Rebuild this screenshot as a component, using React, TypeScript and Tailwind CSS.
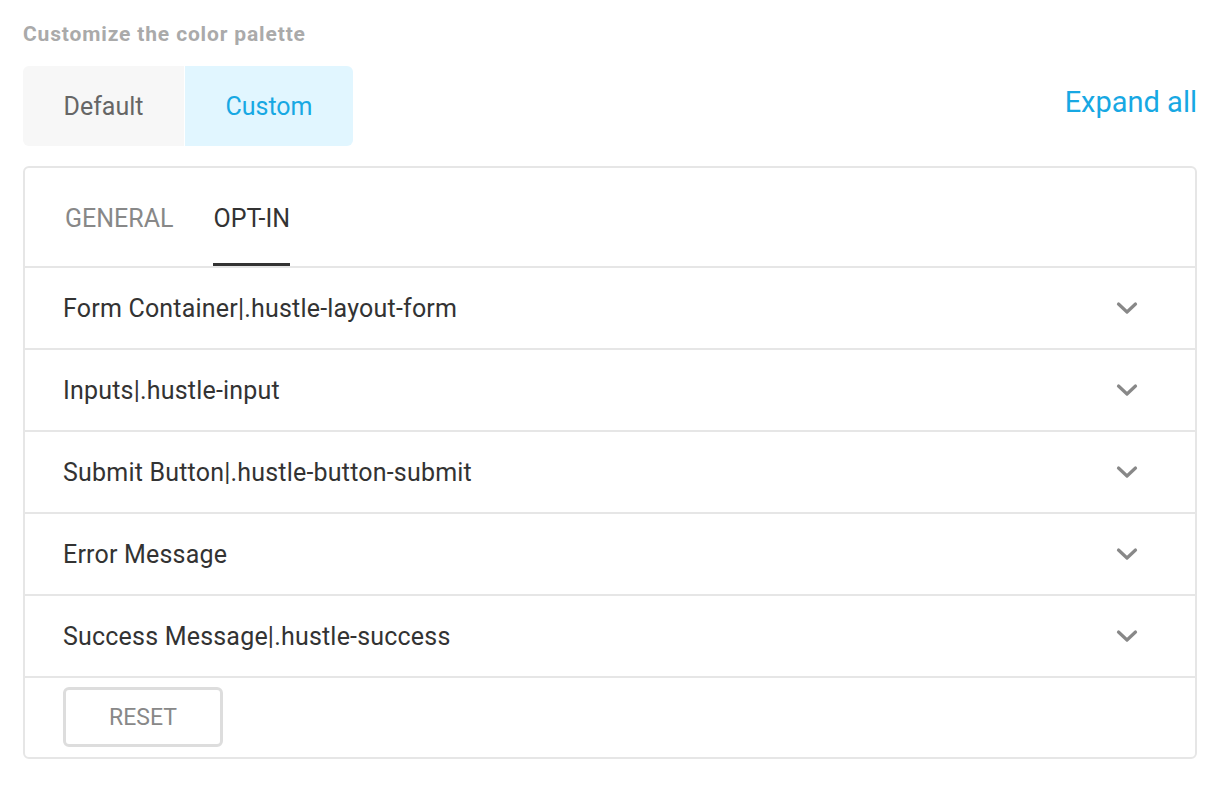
const rows = [
  'Form Container|.hustle-layout-form',
  'Inputs|.hustle-input',
  'Submit Button|.hustle-button-submit',
  'Error Message',
  'Success Message|.hustle-success',
];

function Chevron() {
  return (
    <svg width="22" height="14" viewBox="0 0 22 14" fill="none" className="text-[#888888]">
      <path d="M2.5 3l8.5 8 8.5-8" stroke="currentColor" strokeWidth="3.2" strokeLinecap="round" strokeLinejoin="round" />
    </svg>
  );
}

export default function App() {
  return (
    <div className="min-h-[788px] bg-white px-[23px] pt-[22px] font-['Roboto',sans-serif]">
      <h2 className="text-[21px] font-bold leading-[24px] tracking-[0.85px] text-[#aaaaaa]">Customize the color palette</h2>

      <div className="mt-[20px] flex items-end justify-between">
        <div className="flex h-[80px] gap-px overflow-hidden rounded-[6px]">
          <button className="w-[161px] bg-[#f7f7f7] pt-[2px] text-[25px] text-[#666666]">Default</button>
          <button className="w-[168px] bg-[#e1f6ff] pt-[2px] text-[25px] text-[#17a8e3]">Custom</button>
        </div>
        <button className="mb-[28px] text-[29px] leading-[32px] text-[#17a8e3]">Expand all</button>
      </div>

      <div className="mt-[20px] rounded-[6px] border-2 border-[#e6e6e6]">
        <div className="flex gap-[40px] border-b-2 border-[#e6e6e6] px-[40px]">
          <div className="flex h-[98px] items-center pt-[4px] text-[25px] text-[#888888]">GENERAL</div>
          <div className="mb-[-2px] flex h-[98px] items-center border-b-[3px] border-[#333333] pt-[7px] text-[25px] text-[#333333]">
            OPT-IN
          </div>
        </div>
        {rows.map((r) => (
          <div key={r} className="flex h-[82px] items-center justify-between border-b-2 border-[#e6e6e6] pl-[38px] pr-[57px]">
            <span className="pt-[2px] text-[25px] tracking-[0.2px] text-[#333333]">{r}</span>
            <Chevron />
          </div>
        ))}
        <div className="px-[38px] pt-[9px] pb-[10px]">
          <button className="h-[60px] w-[160px] rounded-[6px] border-[3px] border-[#dddddd] pt-[3px] text-[23px] text-[#888888]">
            RESET
          </button>
        </div>
      </div>
    </div>
  );
}
